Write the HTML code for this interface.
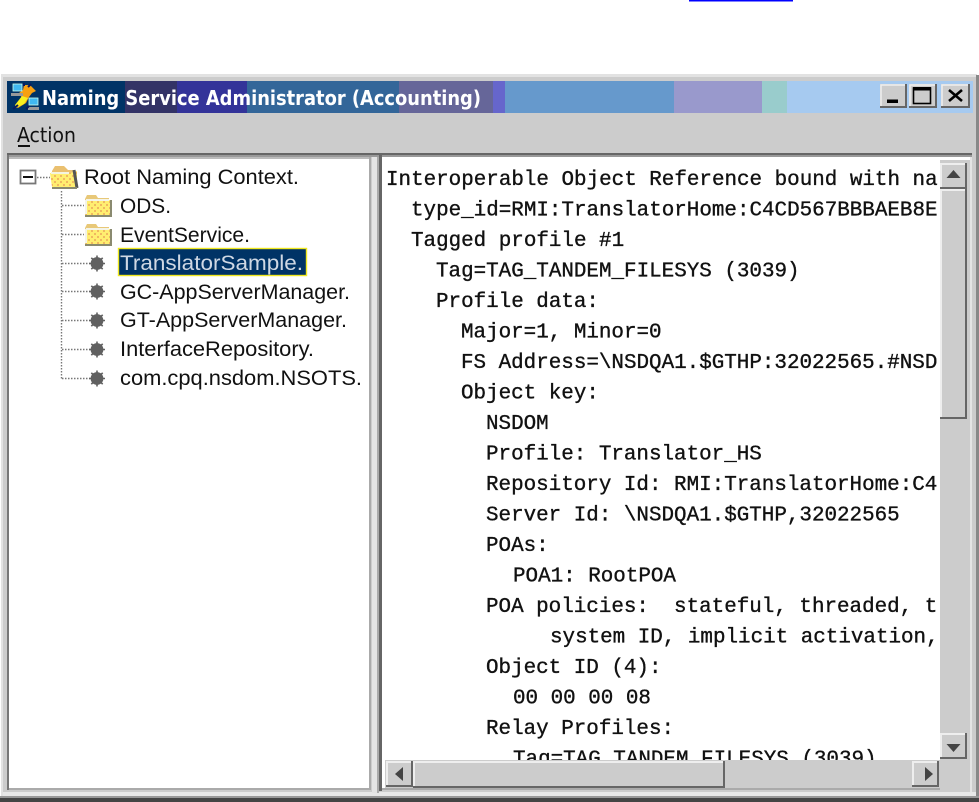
<!DOCTYPE html>
<html><head><meta charset="utf-8"><style>
html,body{margin:0;padding:0;background:#fff;width:979px;height:802px;overflow:hidden}
svg{display:block}
.m{font-family:"Liberation Mono",monospace;font-size:20.9px;fill:#111;stroke:#111;stroke-width:.35;white-space:pre}
.t{font-family:"Liberation Sans",sans-serif;font-size:21px;fill:#111}
</style></head><body>
<svg width="979" height="802" viewBox="0 0 979 802" xmlns="http://www.w3.org/2000/svg">
<defs>
<clipPath id="c"><rect x="383" y="160" width="557" height="600"/></clipPath>
<pattern id="dots" width="6" height="6" patternUnits="userSpaceOnUse"><rect width="6" height="6" fill="#ffee70"/><rect x="1" y="1" width="2" height="2" fill="#f0b860"/><rect x="4" y="4" width="2" height="2" fill="#f0b860"/></pattern>
<g id="fold"><path d="M1 5 L3 1 H12 L14 4 H25 V21 H1Z" fill="#e8c878"/><rect x="2" y="6" width="24" height="15" fill="url(#dots)"/><path d="M2 6H25M2 6V20" fill="none" stroke="#f4f4e8" stroke-width="2"/><path d="M1 22 H27 V6" fill="none" stroke="#8a8a70" stroke-width="2"/></g>
<g id="bul"><circle r="6.4" fill="#606060"/><path d="M0-8V8M-8 0H8M-5.7-5.7L5.7 5.7M5.7-5.7L-5.7 5.7" stroke="#606060" stroke-width="1.6"/></g>
<g id="up"><rect width="27" height="26" fill="#ccc"/><path d="M1 26V1H27" fill="none" stroke="#eee" stroke-width="2"/><path d="M0 25H26V0" fill="none" stroke="#666" stroke-width="2"/></g>
</defs>
<rect x="689" y="0" width="104" height="1.5" fill="#00f"/>

<rect x="1" y="75" width="978" height="727" fill="#ccc"/>
<rect x="1" y="74" width="976" height="3" fill="#e2e2e2"/>
<rect x="1" y="75" width="2" height="722" fill="#e2e2e2"/>
<rect x="976" y="75" width="3" height="727" fill="#888"/>
<rect x="3" y="792" width="973" height="4" fill="#e8e8e8"/>
<rect x="0" y="796" width="979" height="2" fill="#999"/>
<rect x="0" y="798" width="979" height="4" fill="#444"/>

<rect x="7" y="81" width="118" height="32" fill="#003366"/>
<rect x="125" y="81" width="52" height="32" fill="#333366"/>
<rect x="177" y="81" width="70" height="32" fill="#333399"/>
<rect x="247" y="81" width="152" height="32" fill="#336699"/>
<rect x="399" y="81" width="94" height="32" fill="#666699"/>
<rect x="493" y="81" width="12" height="32" fill="#6666cc"/>
<rect x="505" y="81" width="169" height="32" fill="#6699cc"/>
<rect x="674" y="81" width="88" height="32" fill="#9999cc"/>
<rect x="762" y="81" width="25" height="32" fill="#99cccc"/>
<rect x="787" y="81" width="186" height="32" fill="#a6caf0"/>

<path d="M24 85 L30 85 L36 91 L32 93 L29 97 L26 103 L18 108 L15 106 L22 98 L19 93 L23 90Z" fill="#f8a010"/>
<path d="M22 96 L28 98 L24 104 L16 108 L15 105Z" fill="#f8f020"/>
<rect x="13" y="84" width="9" height="7" fill="#40b8f0" stroke="#cfe" stroke-width=".8"/><rect x="11" y="93" width="12" height="3" fill="#999"/>
<rect x="29" y="98" width="9" height="7" fill="#40b8f0" stroke="#cfe" stroke-width=".8"/><rect x="28" y="107" width="11" height="3" fill="#999"/>
<path d="M13 109l5-4M31 84l-3 3M24 83v3M26 109l3-3" stroke="#0a1a60" stroke-width="2"/>
<text x="42" y="105" textLength="439" lengthAdjust="spacingAndGlyphs" style="font-family:'DejaVu Sans',sans-serif;font-weight:bold;font-size:20px;fill:#fff">Naming Service Administrator (Accounting)</text>

<g transform="translate(880,84)"><rect width="27" height="24" fill="#ccc"/><path d="M1 24V1H27" fill="none" stroke="#eee" stroke-width="1.5"/><path d="M0 23H26V0" fill="none" stroke="#666" stroke-width="2"/><rect x="7" y="15.500" width="11" height="3.500" fill="#000"/></g>
<g transform="translate(909,84)"><rect width="28" height="24" fill="#ccc"/><path d="M1 24V1H28" fill="none" stroke="#eee" stroke-width="1.5"/><path d="M0 23H27V0" fill="none" stroke="#666" stroke-width="2"/><rect x="4.500" y="4" width="17" height="15.500" fill="none" stroke="#000" stroke-width="1.6"/><rect x="4" y="3" width="18" height="3.500" fill="#000"/></g>
<g transform="translate(941,84)"><rect width="29" height="24" fill="#ccc"/><path d="M1 24V1H29" fill="none" stroke="#eee" stroke-width="1.5"/><path d="M0 23H28V0" fill="none" stroke="#666" stroke-width="2"/><path d="M8 6L21 17M21 6L8 17" stroke="#000" stroke-width="2.6"/></g>

<text x="17" y="142" textLength="59" lengthAdjust="spacingAndGlyphs" style="font-family:'DejaVu Sans',sans-serif;font-size:20px;fill:#111">Action</text>
<rect x="18" y="145" width="12" height="2" fill="#111"/>

<rect x="7" y="153" width="965" height="2" fill="#666"/>
<rect x="7" y="155" width="965" height="2" fill="#999"/>

<rect x="9" y="157" width="360" height="631" fill="#fff"/>
<rect x="7" y="155" width="2" height="635" fill="#777"/>
<rect x="9" y="788" width="361" height="2" fill="#aaa"/>
<rect x="369" y="157" width="2" height="633" fill="#aaa"/>
<rect x="372" y="157" width="5" height="636" fill="#e4e4e4"/>
<rect x="377" y="157" width="2" height="636" fill="#aaa"/>
<rect x="9" y="157" width="360" height="2" fill="#bbb"/>

<rect x="382" y="157" width="588" height="633" fill="#fff"/>
<rect x="379" y="155" width="3" height="636" fill="#666"/>
<rect x="382" y="788" width="590" height="2" fill="#aaa"/>

<rect x="20.500" y="170.500" width="15" height="13" fill="#fff" stroke="#777" stroke-width="1.800"/>
<rect x="23" y="176" width="10" height="2" fill="#111"/>
<g stroke="#777" stroke-width="1.400" stroke-dasharray="1.500 1.500" fill="none">
<path d="M37 177.500H50"/>
<path d="M61.500 191V378.500"/>
<path d="M62 205.500H84M62 234.500H84M62 263.500H90M62 291.500H90M62 320.500H90M62 349.500H90M62 378.500H90"/>
</g>
<g transform="translate(50,165)"><path d="M2 6 L5 1 H14 L18 5 H24 V10 H2Z" fill="#eac070"/><path d="M0 8 H20 L27 6 V22 H2Z" fill="url(#dots)"/><path d="M1 8H19" stroke="#f4f4e0" stroke-width="2"/><path d="M24 5 L27 23" stroke="#555" stroke-width="3"/><path d="M2 23H27" stroke="#8a8a70" stroke-width="2"/></g>
<use href="#fold" x="84" y="194"/>
<use href="#fold" x="84" y="223"/>
<use href="#bul" x="97" y="263.500"/>
<use href="#bul" x="97" y="291.500"/>
<use href="#bul" x="97" y="320.500"/>
<use href="#bul" x="97" y="349.500"/>
<use href="#bul" x="97" y="378.500"/>
<text class="t" x="84" y="184" textLength="215" lengthAdjust="spacingAndGlyphs">Root Naming Context.</text>
<text class="t" x="120" y="213" textLength="51" lengthAdjust="spacingAndGlyphs">ODS.</text>
<text class="t" x="120" y="242" textLength="130" lengthAdjust="spacingAndGlyphs">EventService.</text>
<rect x="118.500" y="248.500" width="188" height="27" fill="#003366" stroke="#f0e820" stroke-width="1.400"/>
<text class="t" x="120" y="270" textLength="183" lengthAdjust="spacingAndGlyphs" style="fill:#cfd8e4">TranslatorSample.</text>
<text class="t" x="120" y="299" textLength="230" lengthAdjust="spacingAndGlyphs">GC-AppServerManager.</text>
<text class="t" x="120" y="327" textLength="227" lengthAdjust="spacingAndGlyphs">GT-AppServerManager.</text>
<text class="t" x="120" y="356" textLength="194" lengthAdjust="spacingAndGlyphs">InterfaceRepository.</text>
<text class="t" x="120" y="385" textLength="242" lengthAdjust="spacingAndGlyphs">com.cpq.nsdom.NSOTS.</text>

<g clip-path="url(#c)">
<text class="m" x="386" y="185">Interoperable Object Reference bound with na</text>
<text class="m" x="411" y="215.500">type_id=RMI:TranslatorHome:C4CD567BBBAEB8E</text>
<text class="m" x="411" y="246">Tagged profile #1</text>
<text class="m" x="436" y="276.500">Tag=TAG_TANDEM_FILESYS (3039)</text>
<text class="m" x="436" y="307">Profile data:</text>
<text class="m" x="461" y="337.500">Major=1, Minor=0</text>
<text class="m" x="461" y="368">FS Address=\NSDQA1.$GTHP:32022565.#NSD</text>
<text class="m" x="461" y="398.500">Object key:</text>
<text class="m" x="486" y="429">NSDOM</text>
<text class="m" x="486" y="459.500">Profile: Translator_HS</text>
<text class="m" x="486" y="490">Repository Id: RMI:TranslatorHome:C4</text>
<text class="m" x="486" y="520.500">Server Id: \NSDQA1.$GTHP,32022565</text>
<text class="m" x="486" y="551">POAs:</text>
<text class="m" x="513" y="581.500">POA1: RootPOA</text>
<text class="m" x="486" y="612">POA policies:  stateful, threaded, t</text>
<text class="m" x="550" y="642.500">system ID, implicit activation,</text>
<text class="m" x="486" y="673">Object ID (4):</text>
<text class="m" x="513" y="703.500">00 00 00 08</text>
<text class="m" x="486" y="734">Relay Profiles:</text>
<text class="m" x="513" y="764.500">Tag=TAG_TANDEM_FILESYS (3039)</text>
</g>

<rect x="940" y="160" width="30" height="630" fill="#ccc"/>
<rect x="385" y="760" width="585" height="28" fill="#ccc"/>
<rect x="970" y="157" width="2" height="635" fill="#e4e4e4"/>
<use href="#up" x="940" y="163"/>
<path d="M953.500 170l-7 8h14z" fill="#444"/>
<g transform="translate(940,189)"><rect width="27" height="230" fill="#ccc"/><path d="M1 230V1H27" fill="none" stroke="#eee" stroke-width="2"/><path d="M0 229H26V0" fill="none" stroke="#666" stroke-width="2"/></g>
<use href="#up" x="940" y="733"/>
<path d="M953.500 752l-7-8h14z" fill="#444"/>

<use href="#up" x="386" y="761"/>
<path d="M395 774l8-7v14z" fill="#444"/>
<g transform="translate(413,761)"><rect width="312" height="27" fill="#ccc"/><path d="M1 27V1H312" fill="none" stroke="#eee" stroke-width="2"/><path d="M0 26H311V0" fill="none" stroke="#666" stroke-width="2"/></g>
<use href="#up" x="912" y="761"/>
<path d="M933 774l-8-7v14z" fill="#444"/>
</svg>
</body></html>
